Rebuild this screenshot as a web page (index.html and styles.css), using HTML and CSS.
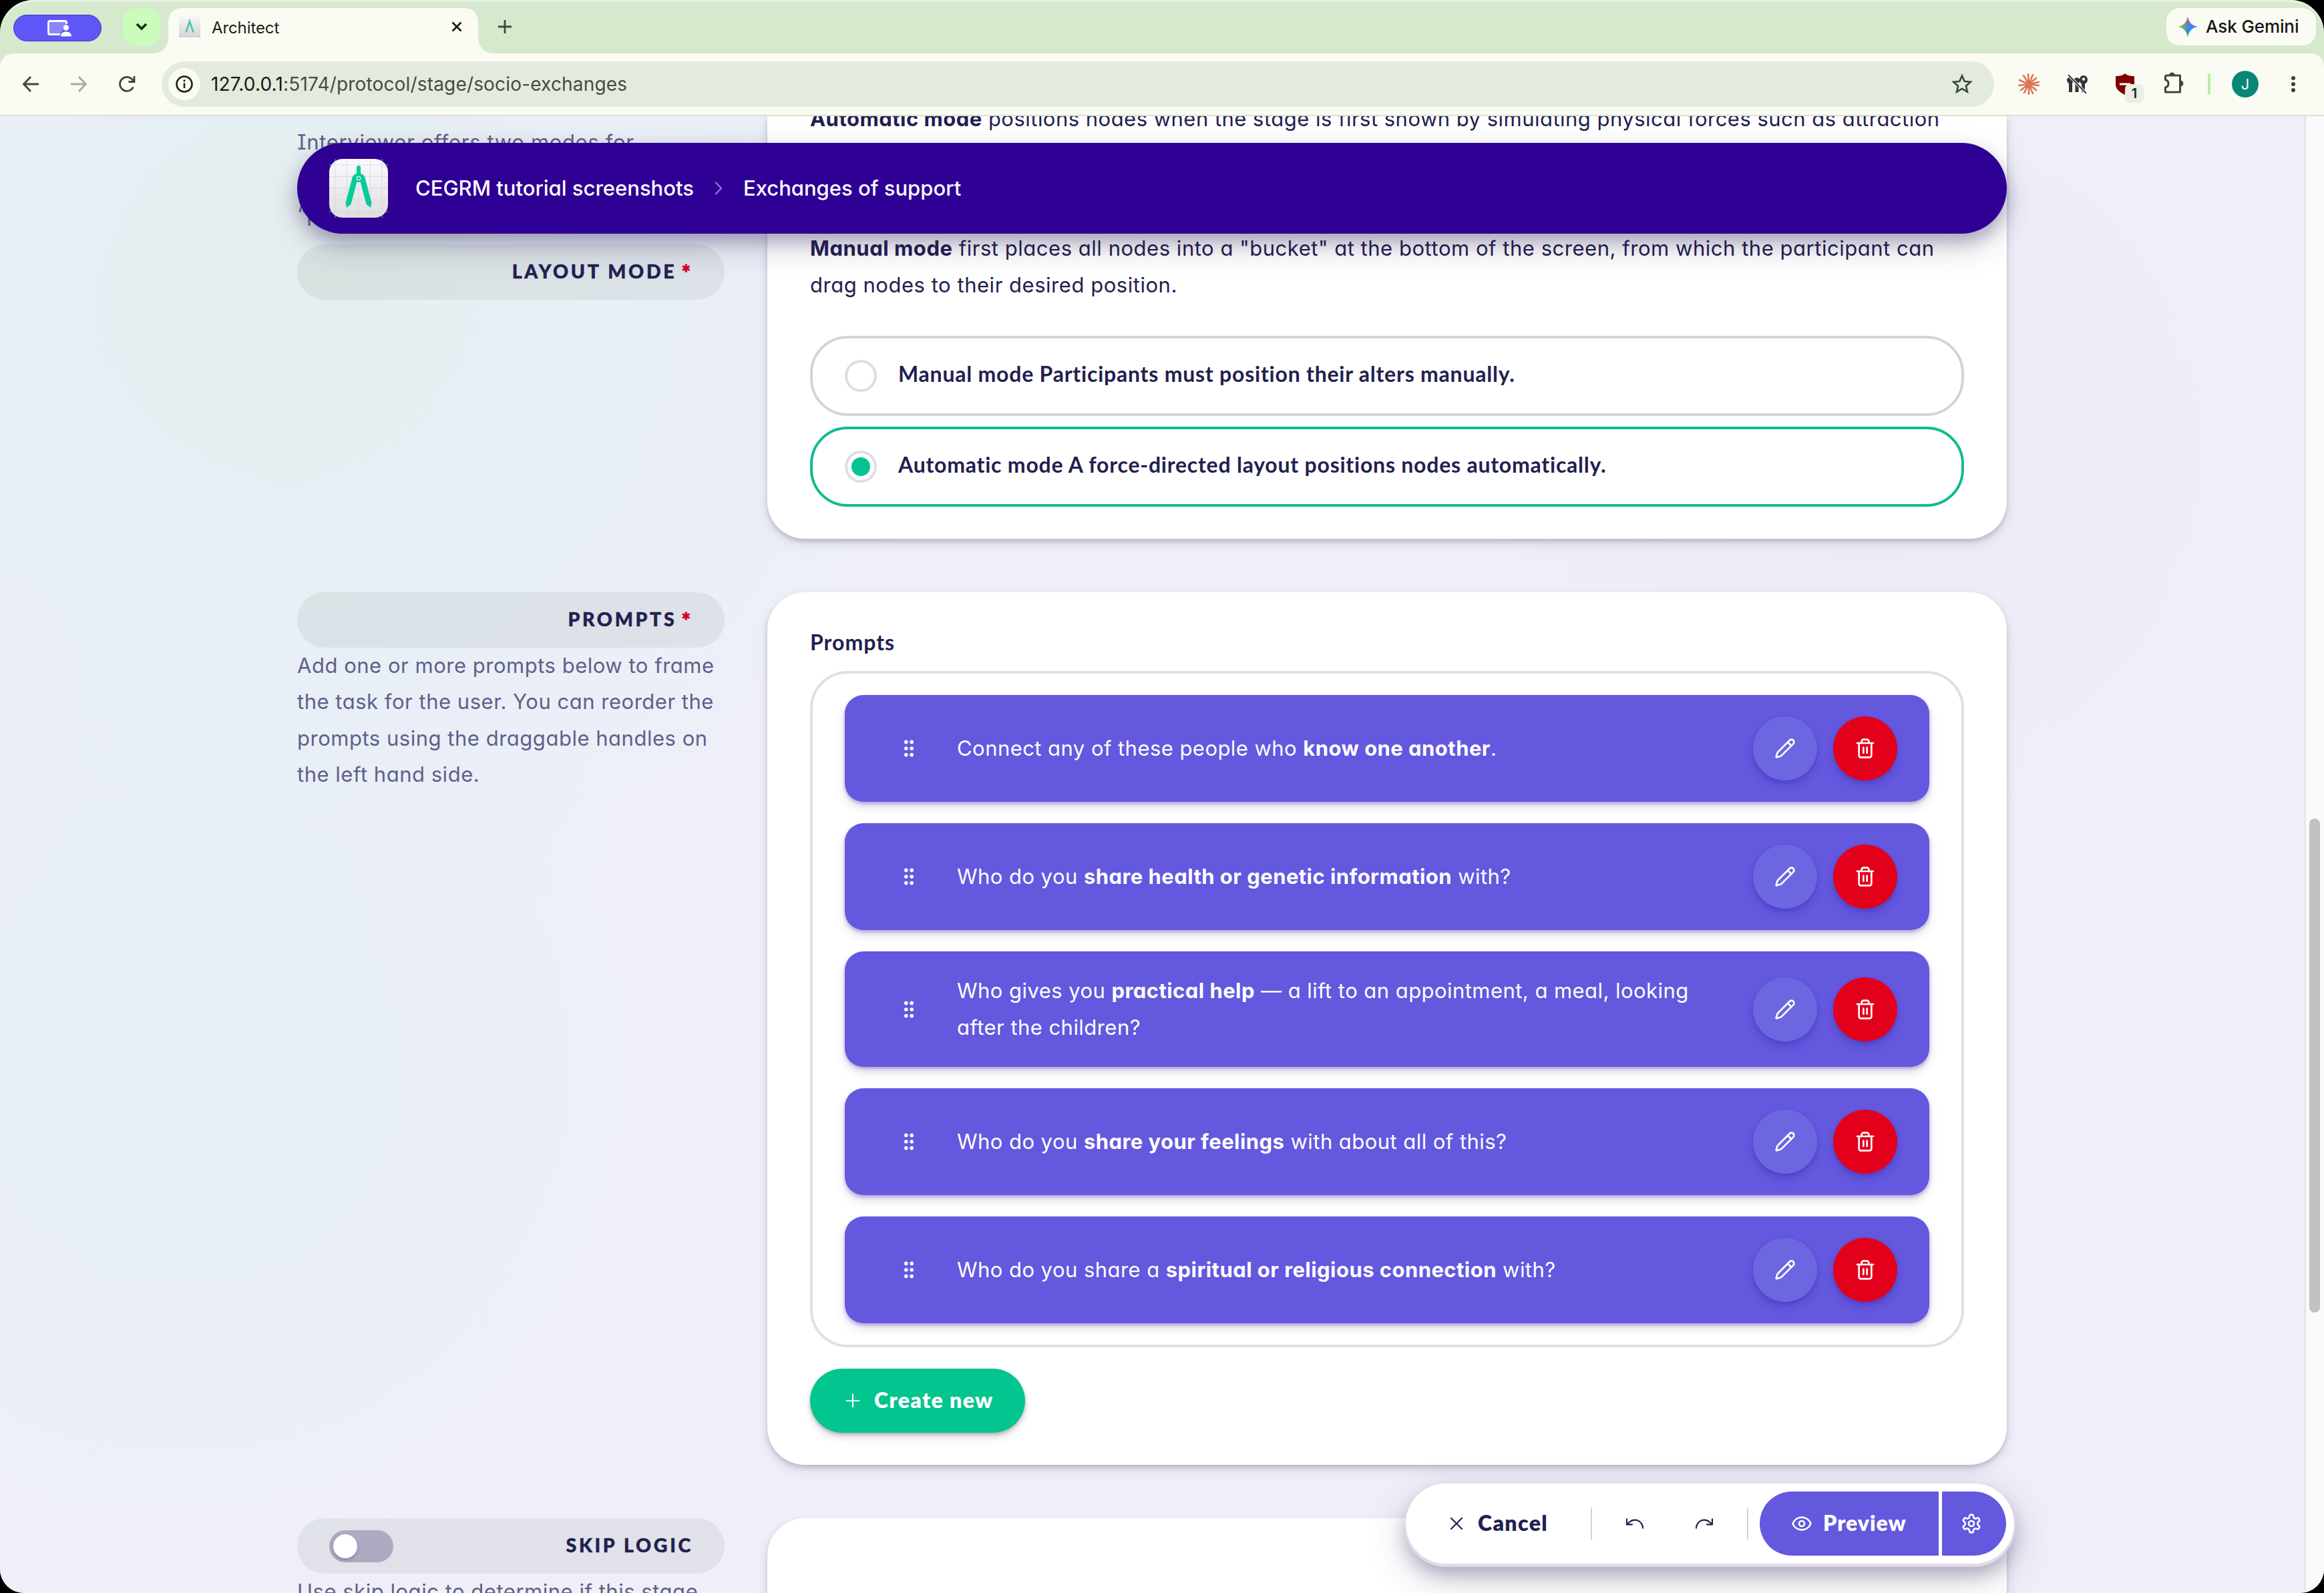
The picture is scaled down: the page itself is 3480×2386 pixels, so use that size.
FILE: index.html
```html
<!DOCTYPE html>
<html lang="en">
<head>
<meta charset="utf-8">
<title>Architect</title>
<link rel="stylesheet" href="styles.css">
</head>
<body>
<svg class="defs" aria-hidden="true">
  <symbol id="pencil" viewBox="0 0 24 24"><path d="M21.174 6.812a1 1 0 0 0-3.986-3.987L3.842 16.174a2 2 0 0 0-.5.83l-1.321 4.352a.5.5 0 0 0 .623.622l4.353-1.32a2 2 0 0 0 .83-.497z"/><path d="m15 5 4 4"/></symbol>
  <symbol id="trash" viewBox="0 0 24 24"><path d="M3 6h18"/><path d="M19 6v14c0 1-1 2-2 2H7c-1 0-2-1-2-2V6"/><path d="M8 6V4c0-1 1-2 2-2h4c1 0 2 1 2 2v2"/><path d="M10 11v6"/><path d="M14 11v6"/></symbol>
  <symbol id="grip" viewBox="0 0 16 26"><circle cx="3.8" cy="3.4" r="2.8"/><circle cx="12.2" cy="3.4" r="2.8"/><circle cx="3.8" cy="13" r="2.8"/><circle cx="12.2" cy="13" r="2.8"/><circle cx="3.8" cy="22.6" r="2.8"/><circle cx="12.2" cy="22.6" r="2.8"/></symbol>
</svg>
<div class="window">
  <header class="tabstrip">
    <div class="share-pill"><svg width="36" height="25" viewBox="0 0 36 25"><path d="M19 21.500H3.500a2 2 0 0 1-2-2v-16a2 2 0 0 1 2-2h23a2 2 0 0 1 2 2V6" fill="#8b84fb" stroke="#fff" stroke-width="2.800"/><circle cx="28" cy="11.500" r="4.200" fill="#fff"/><path d="M20 24.500c0-4.500 3-7 8-7s8 2.500 8 7z" fill="#fff"/></svg></div>
    <div class="tab-search"><svg width="20" height="14" viewBox="0 0 20 14"><path d="M3 3l7 7 7-7" fill="none" stroke="#0f2a0c" stroke-width="3.600"/></svg></div>
    <div class="tab">
      <svg class="favicon" width="32" height="32" viewBox="0 0 32 32"><defs><linearGradient id="fg" x1="0" y1="0" x2="0" y2="1"><stop offset="0" stop-color="#f7f8f4"/><stop offset="1" stop-color="#d3d5d8"/></linearGradient></defs><rect width="32" height="32" fill="url(#fg)"/><path d="M10.500 24.500 16 8l5.500 16.500" fill="none" stroke="#4dc0a4" stroke-width="2.400"/><path d="M16 5v6" stroke="#4dc0a4" stroke-width="2"/></svg>
      <span class="tab-title">Architect</span>
      <svg class="tab-close" width="16" height="16" viewBox="0 0 16 16"><path d="M1.500 1.500l13 13M14.500 1.500l-13 13" stroke="#1c1d1a" stroke-width="2.800"/></svg>
    </div>
    <svg class="new-tab" width="20" height="20" viewBox="0 0 20 20"><path d="M10 0v20M0 10h20" stroke="#3c4b38" stroke-width="2.800"/></svg>
    <div class="gemini">
      <svg width="30" height="30" viewBox="0 0 30 30"><defs><linearGradient id="gs" x1="0" y1=".35" x2="1" y2=".55"><stop offset="0" stop-color="#f5b91c"/><stop offset=".35" stop-color="#5fa77c"/><stop offset=".55" stop-color="#3b86f6"/><stop offset="1" stop-color="#3b86f6"/></linearGradient><linearGradient id="gr" x1=".5" y1="0" x2=".55" y2="1"><stop offset="0" stop-color="#ee4350"/><stop offset=".45" stop-color="#ee4350" stop-opacity="0"/><stop offset=".65" stop-color="#1fa65a" stop-opacity="0"/><stop offset="1" stop-color="#1fa65a"/></linearGradient></defs><path d="M15 0c1.500 8.500 6.500 13.500 15 15-8.500 1.500-13.500 6.500-15 15-1.500-8.500-6.500-13.500-15-15C8.500 13.500 13.500 8.500 15 0z" fill="url(#gs)"/><path d="M15 0c1.500 8.500 6.500 13.500 15 15-8.500 1.500-13.500 6.500-15 15-1.500-8.500-6.500-13.500-15-15C8.500 13.500 13.500 8.500 15 0z" fill="url(#gr)"/></svg>
      <span>Ask Gemini</span>
    </div>
  </header>
  <nav class="toolbar">
    <svg class="nav-ic" width="26" height="26" viewBox="0 0 26 26"><path d="M25 13H3M13 2 2.500 13 13 24"/></svg>
    <svg class="nav-ic dim" width="26" height="26" viewBox="0 0 26 26"><path d="M1 13h22M13 2l10.500 11L13 24"/></svg>
    <svg class="nav-ic" width="26" height="26" viewBox="0 0 26 26"><path d="M22.500 17.500A10.500 10.500 0 1 1 20.500 5.500l3 3M24 1v8.500h-8.500"/></svg>
    <div class="omnibox">
      <div class="info"><svg width="26" height="26" viewBox="0 0 26 26"><circle cx="13" cy="13" r="11.500" fill="none" stroke="#1b2119" stroke-width="2.600"/><path d="M13 11.500V19" stroke="#1b2119" stroke-width="2.600"/><circle cx="13" cy="7.800" r="1.600" fill="#1b2119"/></svg></div>
      <span class="url"><b>127.0.0.1</b>:5174/protocol/stage/socio-exchanges</span>
      <svg class="star" width="32" height="32" viewBox="0 0 32 32"><path d="M16 3.500l3.700 8.300 9 .9-6.800 6 2 8.900-7.900-4.700-7.900 4.700 2-8.900-6.800-6 9-.9z" fill="none" stroke="#3c4a3a" stroke-width="2.700"/></svg>
    </div>
    <svg class="ext e1" width="32" height="32" viewBox="0 0 32 32"><path d="M16 16 15 1M16 16 22 2M16 16l11-9M16 16l15-3M16 16l15 2M16 16l11 9M16 16l6 14M16 16v15M16 16 9 29M16 16 4 25M16 16 1 18M16 16 2 10M16 16 8 3" stroke="#dd7556" stroke-width="2.600" stroke-linecap="round"/></svg>
    <svg class="ext e2" width="32" height="28" viewBox="0 0 32 28"><g fill="#33343a"><path d="M1 7a5.500 5.500 0 0 1 10 0c0 3-1 4.500-2 5.500V26H4V13C2 12 1 10 1 7z"/><path d="M11.500 7a5 5 0 0 1 9 0c0 3-1 4.500-2 5.500V26h-5V13c-1-1-2-3-2-6z"/><path d="M20 7a6 6 0 0 1 12 0c0 3.500-1.500 5.500-4 6.500V26h-5V13.500c-2-1-3-3-3-6.500z"/></g><circle cx="26" cy="6.500" r="2.200" fill="#fafbf2"/><path d="M3 0l27 28" stroke="#fafbf2" stroke-width="4"/><path d="M3 0l27 28" stroke="#33343a" stroke-width="2"/></svg>
    <div class="ublock"><svg width="28" height="32" viewBox="0 0 28 32"><path d="M0 4C6 4 11 3 14 0c3 3 8 4 14 4v12c0 8-6 12-14 16C6 28 0 24 0 16z" fill="#7f0000"/><path d="M6 16h16" stroke="#fff" stroke-width="3"/></svg><span class="badge">1</span></div>
    <svg class="ext e4" width="34" height="34" viewBox="0 0 34 34"><path d="M4.500 6h22v7.500M4.500 6v6.500c6 1.500 6 10 0 11.500V31h22v-8M26.500 6v25" fill="none" stroke="#3a4a37" stroke-width="3" stroke-linejoin="round"/><path d="M10 6a4.500 4.500 0 0 1 9 0zM27 13.500a4.500 4.500 0 0 1 0 9z" fill="#3a4a37"/></svg>
    <i class="sep"></i>
    <div class="avatar">J</div>
    <svg class="kebab" width="6" height="24" viewBox="0 0 6 24"><circle cx="3" cy="3" r="3"/><circle cx="3" cy="12" r="3"/><circle cx="3" cy="21" r="3"/></svg>
  </nav>

  <main class="page">
    <div class="content">
      <section class="row">
        <aside class="side">
          <p class="desc first">Interviewer offers two modes for<br><br>“p</p>
          <h2 class="label">LAYOUT MODE<em>*</em></h2>
        </aside>
        <div class="card top-card">
          <p class="copy auto"><strong>Automatic mode</strong> positions nodes when the stage is first shown by simulating physical forces such as attraction</p>
          <p class="copy manual"><strong>Manual mode</strong> first places all nodes into a "bucket" at the bottom of the screen, from which the participant can<br>drag nodes to their desired position.</p>
          <div class="radios">
            <div class="radio"><i class="dot"></i><span>Manual mode Participants must position their alters manually.</span></div>
            <div class="radio on"><i class="dot"></i><span>Automatic mode A force-directed layout positions nodes automatically.</span></div>
          </div>
        </div>
      </section>

      <section class="row">
        <aside class="side">
          <h2 class="label">PROMPTS<em>*</em></h2>
          <p class="desc">Add one or more prompts below to frame<br>the task for the user. You can reorder the<br>prompts using the draggable handles on<br>the left hand side.</p>
        </aside>
        <div class="card prompts">
          <h3 class="field">Prompts</h3>
          <div class="list">
            <div class="item"><svg class="grip"><use href="#grip"/></svg><p>Connect any of these people who <strong>know one another</strong>.</p><button class="round edit"><svg><use href="#pencil"/></svg></button><button class="round del"><svg><use href="#trash"/></svg></button></div>
            <div class="item"><svg class="grip"><use href="#grip"/></svg><p>Who do you <strong>share health or genetic information</strong> with?</p><button class="round edit"><svg><use href="#pencil"/></svg></button><button class="round del"><svg><use href="#trash"/></svg></button></div>
            <div class="item"><svg class="grip"><use href="#grip"/></svg><p>Who gives you <strong>practical help</strong> — a lift to an appointment, a meal, looking<br>after the children?</p><button class="round edit"><svg><use href="#pencil"/></svg></button><button class="round del"><svg><use href="#trash"/></svg></button></div>
            <div class="item"><svg class="grip"><use href="#grip"/></svg><p>Who do you <strong>share your feelings</strong> with about all of this?</p><button class="round edit"><svg><use href="#pencil"/></svg></button><button class="round del"><svg><use href="#trash"/></svg></button></div>
            <div class="item"><svg class="grip"><use href="#grip"/></svg><p>Who do you share a <strong>spiritual or religious connection</strong> with?</p><button class="round edit"><svg><use href="#pencil"/></svg></button><button class="round del"><svg><use href="#trash"/></svg></button></div>
          </div>
          <button class="create"><svg class="ic thin" viewBox="0 0 24 24"><path d="M5 12h14M12 5v14"/></svg><span>Create new</span></button>
        </div>
      </section>

      <section class="row last">
        <aside class="side">
          <h2 class="label"><i class="switch"></i>SKIP LOGIC</h2>
          <p class="desc">Use skip logic to determine if this stage</p>
        </aside>
        <div class="card"></div>
      </section>
    </div>
    <div class="scrollbar"><i></i></div>

    <div class="crumbs">
      <svg width="88" height="88" viewBox="0 0 88 88"><defs><linearGradient id="lg" x1="0" y1="0" x2="0" y2="1"><stop offset="0" stop-color="#fbfafc"/><stop offset="1" stop-color="#dfdedf"/></linearGradient></defs><rect width="88" height="88" rx="20" fill="url(#lg)"/><path d="M9 0v88M26.500 0v88M44 0v88M61.500 0v88M79 0v88M0 9h88M0 26.500h88M0 44h88M0 61.500h88M0 79h88" stroke="#d5cfe2" stroke-width="1" opacity=".7"/><path d="M41 13a3 3 0 0 1 6 0v9c4 1 6.500 4 7 8l9.500 36-1.500 7-6.500-5-9-34a4 4 0 0 1-5 0l-9 34-6.500 5-1.500-7 9.500-36c.5-4 3-7 7-8z" fill="#06cb9b"/><circle cx="44" cy="29" r="2.600" fill="#06b98d" stroke="#e5fff7" stroke-width="1.200"/></svg>
      <span class="crumb a">CEGRM tutorial screenshots</span>
      <svg class="chev" width="12" height="20" viewBox="0 0 12 20"><path d="M2 1.500 10 10 2 18.500" fill="none" stroke="#8d70d8" stroke-width="2.400" stroke-linecap="round" stroke-linejoin="round"/></svg>
      <span class="crumb">Exchanges of support</span>
    </div>

    <div class="actions">
      <button class="cancel"><svg class="ic thin" viewBox="0 0 24 24"><path d="M18 6 6 18M6 6l12 12"/></svg><span>Cancel</span></button>
      <i class="rule"></i>
      <div class="history">
        <button><svg class="ic thin" viewBox="0 0 24 24"><path d="M3 7v6h6"/><path d="M21 17a9 9 0 0 0-9-9 9 9 0 0 0-6 2.300L3 13"/></svg></button>
        <button><svg class="ic thin" viewBox="0 0 24 24"><path d="M21 7v6h-6"/><path d="M3 17a9 9 0 0 1 9-9 9 9 0 0 1 6 2.300l3 2.700"/></svg></button>
      </div>
      <i class="rule"></i>
      <div class="split">
        <button class="preview"><svg class="ic" viewBox="0 0 24 24"><path d="M2.062 12.348a1 1 0 0 1 0-.696 10.750 10.750 0 0 1 19.876 0 1 1 0 0 1 0 .696 10.750 10.750 0 0 1-19.876 0"/><circle cx="12" cy="12" r="3"/></svg><span>Preview</span></button>
        <button class="gear"><svg class="ic" viewBox="0 0 24 24"><path d="M12.220 2h-.44a2 2 0 0 0-2 2v.18a2 2 0 0 1-1 1.730l-.43.25a2 2 0 0 1-2 0l-.15-.08a2 2 0 0 0-2.730.73l-.22.38a2 2 0 0 0 .73 2.730l.15.1a2 2 0 0 1 1 1.720v.51a2 2 0 0 1-1 1.740l-.15.09a2 2 0 0 0-.73 2.730l.22.38a2 2 0 0 0 2.730.73l.15-.08a2 2 0 0 1 2 0l.43.25a2 2 0 0 1 1 1.730V20a2 2 0 0 0 2 2h.44a2 2 0 0 0 2-2v-.18a2 2 0 0 1 1-1.730l.43-.25a2 2 0 0 1 2 0l.15.08a2 2 0 0 0 2.730-.73l.22-.39a2 2 0 0 0-.73-2.730l-.15-.08a2 2 0 0 1-1-1.740v-.5a2 2 0 0 1 1-1.740l.15-.09a2 2 0 0 0 .73-2.730l-.22-.38a2 2 0 0 0-2.730-.73l-.15.08a2 2 0 0 1-2 0l-.43-.25a2 2 0 0 1-1-1.730V4a2 2 0 0 0-2-2z"/><circle cx="12" cy="12" r="3"/></svg></button>
      </div>
    </div>
  </main>
</div>
</body>
</html>
```
FILE: styles.css
```css
* { box-sizing: border-box; }
body { margin: 0; background: #000; width: 3480px; height: 2386px; overflow: hidden; }
h2, h3, p { margin: 0; }
button { border: 0; padding: 0; margin: 0; font: inherit; letter-spacing: inherit; color: inherit; background: none; }
svg { flex: none; display: block; }
.defs { position: absolute; width: 0; height: 0; }

.window {
  width: 3480px; height: 2386px; overflow: hidden; border-radius: 50px 50px 36px 36px;
  background: #d6e9cd; box-shadow: inset 0 3px 0 #e7f1e2;
  font-family: Inter, "Liberation Sans", sans-serif;
  display: flex; flex-direction: column;
}

/* browser chrome */
.tabstrip { height: 80px; flex: none; display: flex; padding: 12px 12px 0 20px; }
.share-pill { width: 132px; height: 40px; margin-top: 10px; border-radius: 20px; background: #5f56f7; border: 1px solid #4036c4; display: flex; align-items: center; justify-content: center; padding-left: 5px; }
.tab-search { width: 56px; height: 56px; margin-left: 32px; border-radius: 20px; background: #cbfcbc; display: flex; align-items: center; justify-content: center; }
.tab { position: relative; width: 464px; height: 68px; margin-left: 12px; border-radius: 20px 20px 0 0; background: #fafbf2; display: flex; padding: 12px 24px 0 16px; }
.tab::before, .tab::after { content: ""; position: absolute; bottom: 0; width: 22px; height: 22px; }
.tab::before { left: -22px; background: radial-gradient(circle at 0 0, transparent 21.5px, #fafbf2 22px); }
.tab::after { right: -22px; background: radial-gradient(circle at 100% 0, transparent 21.5px, #fafbf2 22px); }
.tab-title { flex: 1; margin-left: 17px; font-size: 24px; line-height: 35px; letter-spacing: -.1px; color: #1c1d1a; }
.tab-close { margin-top: 8px; }
.new-tab { margin: 18px 0 0 30px; }
.gemini { margin-left: auto; width: 224px; height: 56px; border-radius: 20px; background: #fafbf2; display: flex; align-items: center; padding-left: 17px; gap: 12px; font-size: 26px; font-weight: 500; letter-spacing: -.1px; color: #161815; }
.gemini span { margin-top: -2px; }

.toolbar { height: 94px; flex: none; background: #fafbf2; border-radius: 20px 20px 0 0; border-bottom: 2px solid #dbe2d5; display: flex; align-items: center; padding-left: 33px; }
.nav-ic { margin-right: 46px; fill: none; stroke: #3a4a37; stroke-width: 2.8; }
.nav-ic.dim { stroke: #a6aba0; }
.nav-ic:nth-child(3) { margin-right: 39px; }
.omnibox { width: 2744px; height: 68px; border-radius: 34px; background: #e3ebde; display: flex; align-items: center; padding: 0 32px 0 10px; }
.info { width: 48px; height: 48px; border-radius: 50%; background: #fafbf2; display: flex; align-items: center; justify-content: center; }
.url { flex: 1; margin-left: 16px; font-size: 28px; letter-spacing: .17px; color: #454c42; }
.url b { font-weight: 400; color: #161815; }
.e1 { margin-left: 36px; }
.e2 { margin-left: 40px; }
.ublock { position: relative; margin-left: 42px; }
.badge { position: absolute; left: 14px; top: 16px; width: 28px; height: 28px; border-radius: 7px; background: #ebede6; font-size: 20px; line-height: 28px; font-weight: 600; text-align: center; color: #222; }
.e4 { margin: -4px 0 0 42px; }
.sep { width: 4px; height: 32px; border-radius: 2px; background: #b5f0a5; margin-left: 34px; }
.avatar { width: 40px; height: 40px; border-radius: 50%; background: #088779; color: #fff; font-size: 22px; line-height: 40px; text-align: center; margin-left: 32px; }
.kebab { margin-left: 49px; fill: #33432f; }

/* page */
.page {
  position: relative; flex: 1; overflow: hidden; display: flex; justify-content: space-between; padding-left: 445px;
  background:
    radial-gradient(circle 1000px at 430px 270px, #e5efef 0, #e6eff3 30%, rgba(231, 239, 246, .75) 55%, rgba(239, 239, 249, 0)),
    radial-gradient(circle 760px at 270px 1420px, #e6eff4 0, rgba(231, 239, 246, .8) 35%, rgba(239, 239, 249, 0)),
    radial-gradient(circle 650px at 2800px 500px, rgba(235, 235, 245, .9), rgba(235, 235, 245, 0)),
    #efeff9;
}
.content { width: 2560px; display: flex; flex-direction: column; gap: 80px; }
.row { display: flex; gap: 64px; flex: none; }
.side { width: 640px; flex: none; }
.card { width: 1856px; border-radius: 56px; background: #fff; box-shadow: 0 4px 6px rgba(40, 30, 80, .18), 0 8px 18px rgba(40, 30, 80, .11); padding: 0 64px 48px; }
.top-card { height: 633px; border-radius: 0 0 56px 56px; }
.row.last .card { height: 400px; }

.desc, .copy, .item p { font-size: 31px; line-height: 54.4px; letter-spacing: .45px; font-feature-settings: "cv11", "cv08"; white-space: nowrap; }
.desc { color: #5f6088; }
.row .desc { letter-spacing: .52px; }
.row .desc.first { margin: 11.5px 0 17px; height: 163.5px; letter-spacing: .66px; }
.copy { color: #22204f; }
.copy.auto { margin: -23.5px 0 140.5px; letter-spacing: .48px; }
.copy.manual { letter-spacing: .53px; }
strong { font-weight: 750; }

.label { height: 83px; border-radius: 42px; background: rgba(120, 130, 120, .12); display: flex; align-items: center; justify-content: flex-end; padding: 0 47px 3px 48px; font: 900 28.5px/40px Lato, "Noto Sans", sans-serif; letter-spacing: 3.7px; color: #22204f; -webkit-text-stroke: .5px #22204f; }
.label em { font: 900 32px/40px Lato, sans-serif; color: #d9001f; -webkit-text-stroke: 1px #d9001f; margin: 3px 4px 0 7px; letter-spacing: 0; }
.switch { width: 96px; height: 48px; border-radius: 24px; background: #acabc1; margin: 3px auto 0 0; padding: 6px; }
.switch::before { content: ""; display: block; width: 36px; height: 36px; border-radius: 50%; background: #fff; box-shadow: 0 2px 4px rgba(30, 20, 70, .3); }

.radios { display: flex; flex-direction: column; gap: 16px; margin-top: 48.5px; }
.radio { height: 120px; border: 4px solid #d4d3dc; border-radius: 56px; display: flex; align-items: center; padding-left: 48px; gap: 32px; font: 700 32px/54px Lato, "Noto Sans", sans-serif; letter-spacing: .77px; color: #22204f; white-space: nowrap; }
.radio span { margin-top: -6px; }
.radio.on { border-color: #12bb90; }
.dot { width: 48px; height: 48px; border: 4px solid #dedde6; border-radius: 50%; display: flex; align-items: center; justify-content: center; }
.on .dot::before { content: ""; width: 28px; height: 28px; border-radius: 50%; background: #04c491; }

.field { padding-top: 48px; height: 118px; font: 700 32px/54px Lato, "Noto Sans", sans-serif; letter-spacing: 1px; color: #22204f; }
.list { border: 4px solid #dfdfe6; border-radius: 56px; padding: 32px 48px; display: flex; flex-direction: column; gap: 32px; }
.item { min-height: 160px; border-radius: 28px; background: #6358de; color: #fff; display: flex; align-items: center; padding: 32px 48px 32px 88px; box-shadow: 0 3px 5px rgba(70, 40, 170, .32), 0 8px 14px rgba(70, 40, 120, .16); }
.item:nth-child(3) { height: 173px; }
.item p { flex: 1; margin: 0 0 0 64px; }
.grip { width: 16px; height: 26px; fill: #fff; }
.round { width: 96px; height: 96px; border-radius: 50%; display: flex; align-items: center; justify-content: center; box-shadow: 0 3px 5px rgba(60, 40, 180, .3), 0 8px 12px rgba(60, 40, 180, .25); }
.round svg, .ic { width: 32px; height: 32px; fill: none; stroke: currentColor; stroke-width: 2; stroke-linecap: round; stroke-linejoin: round; }
.ic.thin { stroke-width: 1.6; }
.edit { background: #6c67e1; }
.del { background: #e3001b; margin-left: 24px; }
.create { margin-top: 32px; width: 322px; height: 96px; border-radius: 48px; background: #02c58f; color: #fff; display: flex; align-items: center; padding-left: 48px; gap: 16px; font: 800 32px/54px Lato, "Noto Sans", sans-serif; letter-spacing: 1.4px; box-shadow: 0 3px 5px rgba(50, 20, 50, .25), 0 8px 12px rgba(60, 20, 40, .12); }
.create span, .cancel span, .preview span { margin-top: -2px; }

.scrollbar { width: 30px; border-left: 3px solid #e6e6eb; background: #fafafa; padding: 1052px 0 0 5px; flex: none; }
.scrollbar i { display: block; width: 16px; height: 740px; border-radius: 8px; background: #c1c1c1; }

/* floating bars */
.crumbs { position: absolute; left: 445px; top: 40px; width: 2560px; height: 136px; border-radius: 68px; background: #2e0094; color: #fff; display: flex; align-items: center; padding-left: 48px; font-size: 31px; font-weight: 500; font-feature-settings: "cv11"; box-shadow: 0 12px 22px rgba(40, 20, 80, .25), 0 20px 50px rgba(40, 30, 80, .2); }
.crumb { margin-top: -1px; }
.crumb.a { margin-left: 41px; }
.chev { margin: 0 31px; }
.actions { position: absolute; left: 2105px; top: 2048px; width: 911px; height: 120px; border-radius: 60px; background: #fff; color: #22204f; display: flex; align-items: center; padding: 12px; font: 800 32px/54px Lato, "Noto Sans", sans-serif; letter-spacing: 1px; box-shadow: 0 3px 0 2px #dddce7, 0 16px 24px rgba(40, 20, 80, .25), 0 20px 60px rgba(40, 30, 80, .22); }
.cancel { width: 249px; height: 96px; display: flex; align-items: center; gap: 16px; padding-left: 48px; letter-spacing: 1.4px; }
.rule { width: 2px; height: 48px; background: #d3d2dc; margin: 0 16px; }
.history { display: flex; gap: 8px; }
.history button { width: 96px; height: 96px; display: flex; align-items: center; justify-content: center; }
.split { display: flex; gap: 5px; margin-left: auto; color: #fff; }
.preview { width: 268px; height: 96px; border-radius: 48px 0 0 48px; background: #6358de; display: flex; align-items: center; padding-left: 47px; gap: 16px; }
.gear { width: 96px; height: 96px; border-radius: 0 48px 48px 0; background: #6358de; display: flex; align-items: center; padding-left: 28px; }
```
